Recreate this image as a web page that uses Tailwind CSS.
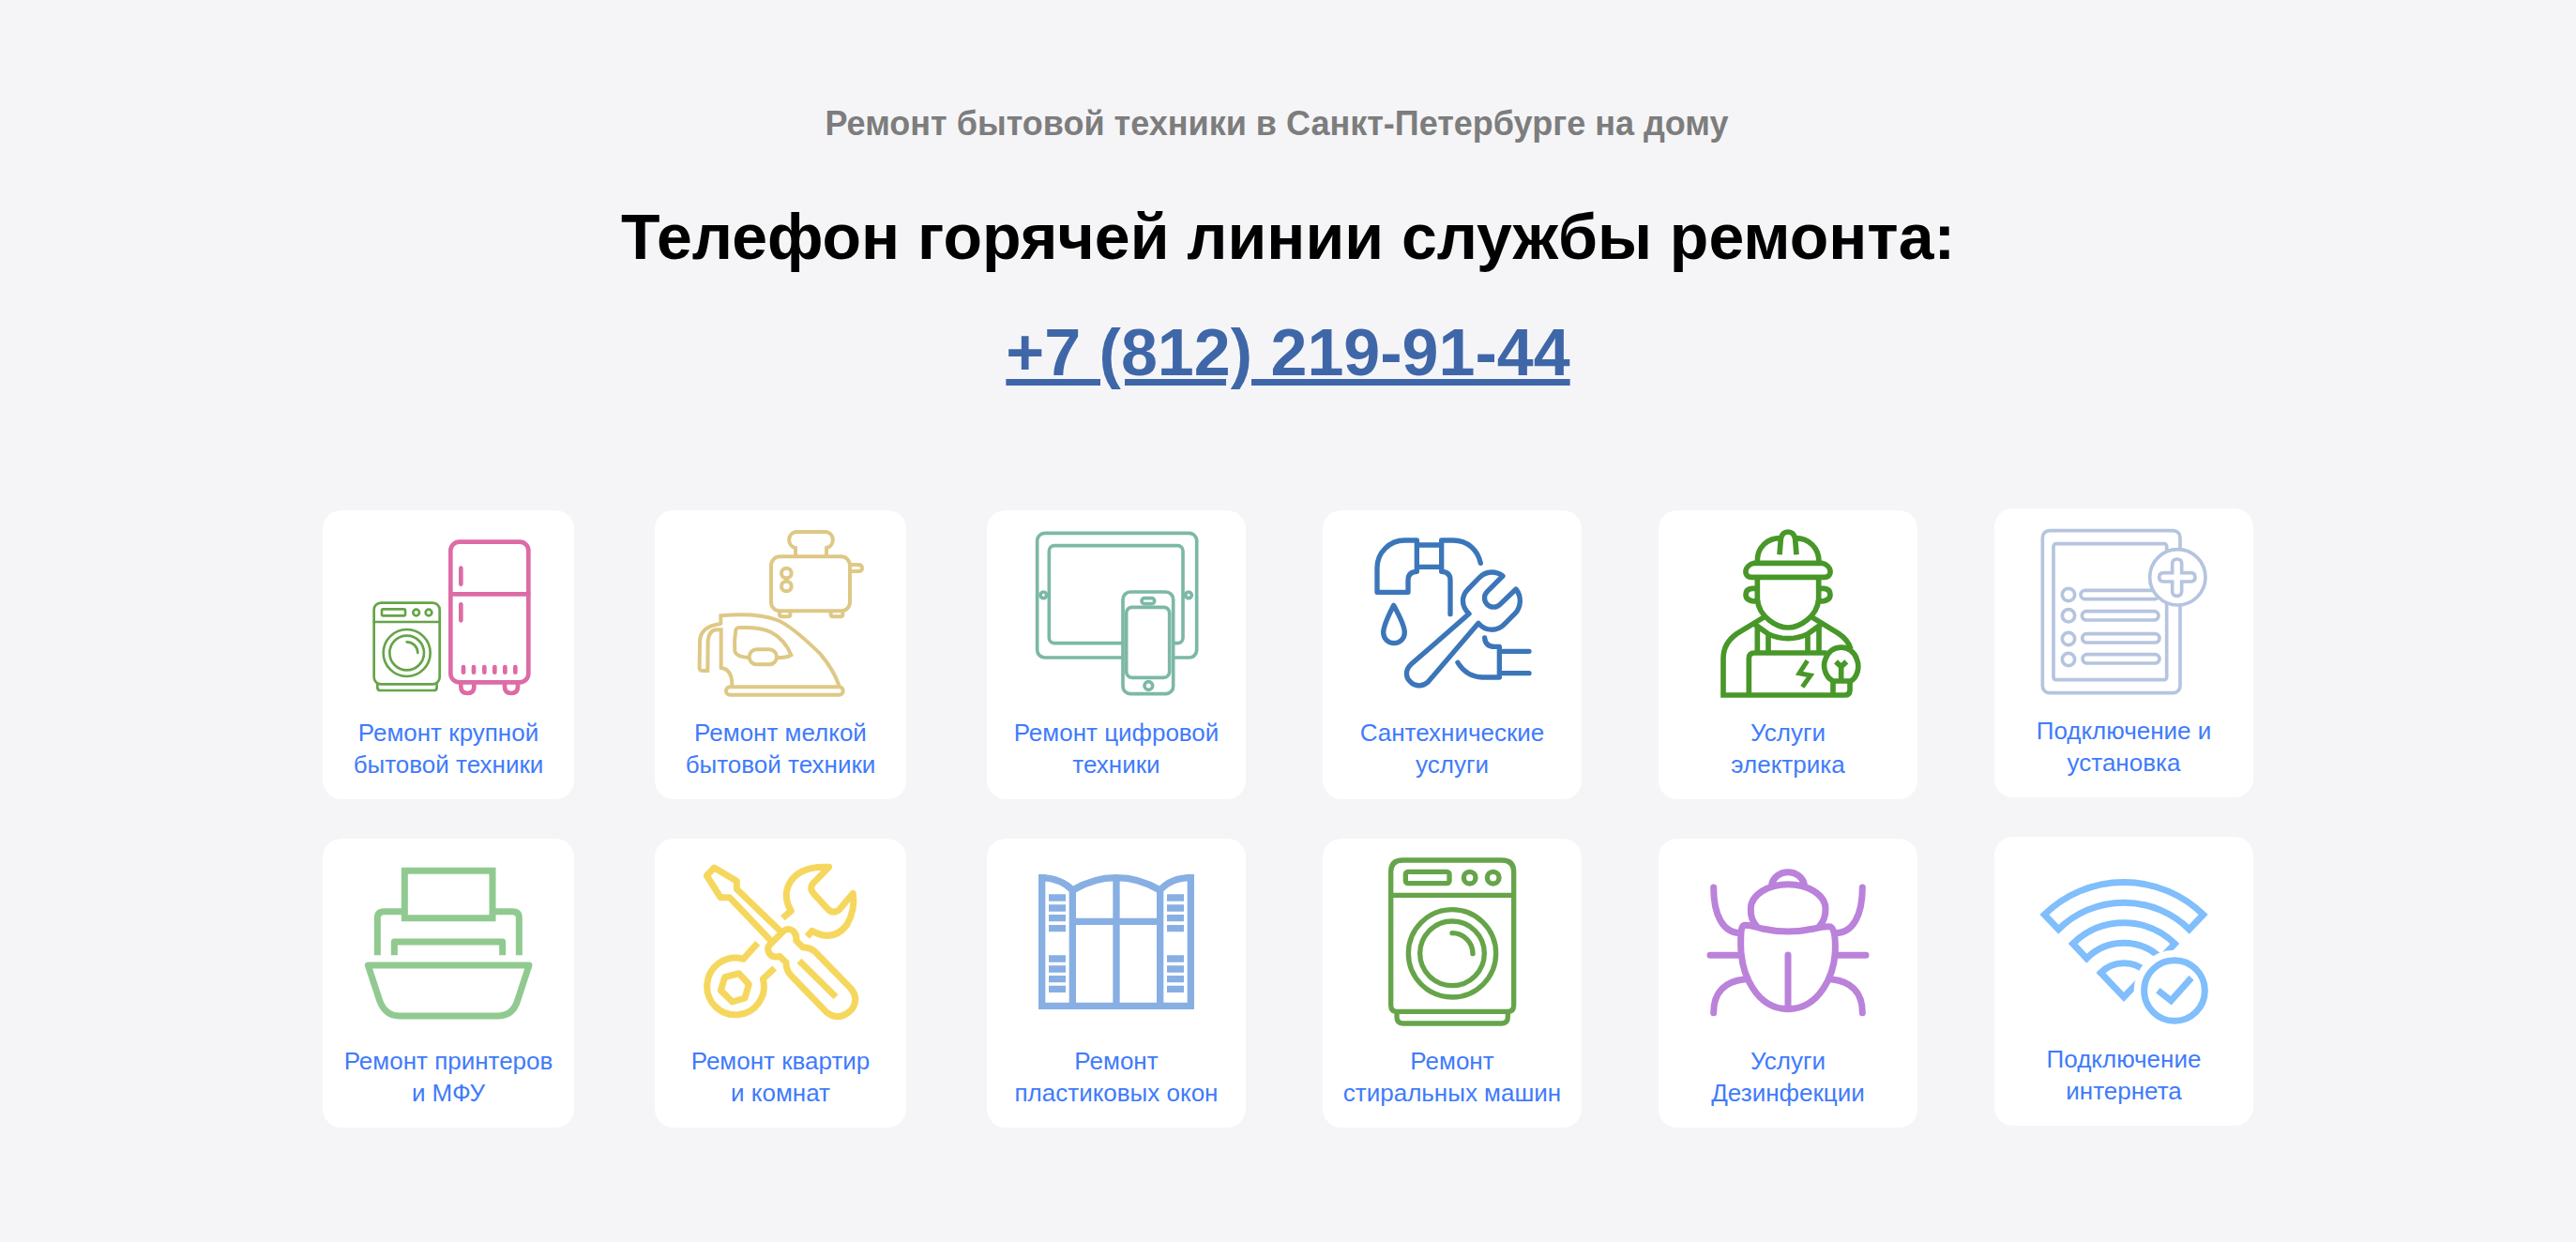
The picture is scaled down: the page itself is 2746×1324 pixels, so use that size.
<!DOCTYPE html>
<html lang="ru">
<head>
<meta charset="utf-8">
<meta name="viewport" content="width=device-width, initial-scale=1">
<title>Ремонт бытовой техники в Санкт-Петербурге на дому</title>
<script src="https://cdn.jsdelivr.net/npm/@tailwindcss/browser@4"></script>
</head>
<body class="min-h-screen bg-[#f5f5f8] font-['Liberation_Sans',Arial,sans-serif]">
<main class="px-6 pt-[108px] pb-[120px]">
  <header class="text-center font-bold">
    <p class="pr-6 text-[36px] leading-[48px] text-[#7d7d7d]">Ремонт бытовой техники в Санкт-Петербурге на дому</p>
    <h1 class="mt-[56px] text-[68px] leading-[80px] text-black">Телефон горячей линии службы ремонта:</h1>
    <p class="mt-[44px] text-[70px] leading-[80px]"><a href="tel:+78122199144" class="text-[#3f67a8] underline">+7 (812) 219-91-44</a></p>
  </header>

  <ul class="mx-auto mt-[128px] grid max-w-[2058px] grid-cols-[354fr_354fr_358fr_358fr_358fr_276fr] gap-y-[42px] text-center text-[26px] leading-[34px] text-[#3f7bfb]">
    <li class="pr-[86px]"><a href="#" class="flex flex-col items-center gap-5 rounded-[20px] bg-white py-5">
      <svg class="size-[180px]" viewBox="144 72 540 540" fill="none" stroke-linecap="round" aria-hidden="true">
        <g stroke="#65a448" stroke-width="8"><rect x="176" y="308" width="210" height="260" rx="22"/><path d="M176 369H386M281 433A35 35 0 0 1 316 468M187 570V578Q187 588 197 588H367Q377 588 377 578V570"/><rect x="201" y="328" width="75" height="21" rx="4"/><circle cx="311" cy="339" r="10"/><circle cx="351" cy="339" r="10"/><circle cx="281" cy="468" r="75"/><circle cx="281" cy="468" r="55"/></g>
        <g stroke="#dd6ba6" stroke-width="14"><rect x="421" y="113" width="249" height="449" rx="28"/><path d="M421 280H670M454 197V248M454 313V364M462 513V530M495 513V530M529 513V530M562 513V530M595 513V530M628 513V530M454 565V576Q454 597 475 597Q496 597 496 576V565M594 565V576Q594 597 615 597Q636 597 636 576V565"/></g>
      </svg><span>Ремонт крупной<br>бытовой техники</span></a></li>

    <li class="pr-[86px]"><a href="#" class="flex flex-col items-center gap-5 rounded-[20px] bg-white py-5">
      <svg class="size-[180px]" viewBox="156 72 540 540" fill="none" stroke="#dec885" stroke-width="12" aria-hidden="true">
        <rect x="396" y="160" width="252" height="174" rx="28"/><path d="M474 157V132A26 26 0 0 1 475 81H572A26 26 0 0 1 573 132V157M650 186H674Q687 186 687 197Q687 207 674 207H650M423 336V346Q423 352 430 352H450Q457 352 457 346V336M587 336V346Q587 352 594 352H618Q625 352 625 346V336"/><circle cx="445" cy="213" r="16"/><circle cx="445" cy="255" r="16"/>
        <path d="M235 378V349Q350 338 415 363Q460 380 552 470Q595 520 614 574M236 375Q170 382 168 430L167 510Q165 525 176 525H193L194 430Q198 393 224 394H236V516Q272 520 271 574"/><path d="M324 483Q283 480 280 462Q277 430 283 395Q286 387 295 387Q365 385 396 402Q440 425 460 475Q445 484 417 484"/><rect x="326" y="457" width="88" height="48" rx="24"/><rect x="252" y="577" width="374" height="25" rx="12"/>
      </svg><span>Ремонт мелкой<br>бытовой техники</span></a></li>

    <li class="pr-[82px]"><a href="#" class="flex flex-col items-center gap-5 rounded-[20px] bg-white py-5">
      <svg class="size-[180px]" viewBox="165 72 540 540" fill="none" stroke="#7cb8a6" stroke-width="11" aria-hidden="true">
        <rect x="182" y="85" width="510" height="398" rx="24"/><rect x="220" y="125" width="428" height="312" rx="17"/><circle cx="202" cy="283" r="10"/><circle cx="666" cy="283" r="10"/>
        <rect x="456" y="273" width="161" height="326" rx="24" fill="#fff"/><rect x="467" y="322" width="138" height="225" rx="18"/><rect x="516" y="293" width="41" height="18" rx="9"/><circle cx="538" cy="573" r="13"/>
      </svg><span>Ремонт цифровой<br>техники</span></a></li>

    <li class="pr-[82px]"><a href="#" class="flex flex-col items-center gap-5 rounded-[20px] bg-white py-5">
      <svg class="size-[180px]" viewBox="174 72 540 540" fill="none" stroke="#3b76b9" stroke-width="16" stroke-linecap="round" stroke-linejoin="round" aria-hidden="true">
        <path d="M331 108H292A88 88 0 0 0 204 196V274H303V236Q303 208 331 208ZM331 123H410M331 193H410M438 344V236Q438 208 410 208V108H447C494 108 526 140 535 181"/>
        <path d="M257 316Q292 380 292 403A34 34 0 0 1 224 403Q224 380 257 316Z"/>
        <path d="M498 343C470 315 475 285 494 265L530 228C553 204 585 206 606 222L556 272A28 28 0 0 0 597 313L648 264C668 290 663 322 646 341L611 376C588 400 550 400 528 373L366 562C345 580 320 572 310 560C294 546 294 522 312 505Z"/>
        <path d="M548 420Q550 448 580 448H595V546H540Q490 544 462 499M600 463H690M600 533H690"/>
      </svg><span>Сантехнические<br>услуги</span></a></li>

    <li class="pr-[82px]"><a href="#" class="flex flex-col items-center gap-5 rounded-[20px] bg-white py-5">
      <svg class="size-[180px]" viewBox="168 72 540 540" fill="none" stroke="#489729" stroke-width="17" aria-hidden="true">
        <path d="M340 178C338 128 374 101 414 101M462 101C504 101 538 132 537 178M411 154L415 104Q419 81 438 81Q457 81 461 104L465 154M330 181H546C580 188 582 226 554 226H322C294 226 296 188 330 181Z"/>
        <path d="M340 230V295C344 355 405 387 438 387C471 387 532 355 536 295V230M338 262H322Q303 264 303 282Q303 303 338 303M538 262H554Q573 264 573 282Q573 303 538 303"/>
        <path d="M364 352L275 406Q231 437 231 485V603H620Q635 603 636 588V558M512 352L600 406Q630 426 639 456M328 374L376 408Q438 436 500 408L548 374M340 386V462M375 408V462M501 408V462M537 386V462M313 600V485Q313 468 331 468H562"/>
        <path d="M500 493L474 533L510 540L484 577" stroke-width="15"/>
        <path d="M582 558C556 545 548 510 558 487C577 436 643 440 658 488C669 516 658 548 638 558ZM582 558V600M608 555V512L591 496M608 512L625 496" stroke-width="17"/>
      </svg><span>Услуги<br>электрика</span></a></li>

    <li class="-mt-0.5"><a href="#" class="flex flex-col items-center gap-5 rounded-[20px] bg-white py-5">
      <svg class="size-[180px]" viewBox="162 66 540 540" fill="none" stroke="#b5c4df" stroke-width="11" aria-hidden="true">
        <rect x="172" y="77" width="440" height="519" rx="22"/><rect x="207" y="119" width="362" height="435" rx="8"/>
        <circle cx="255" cy="282" r="20"/><circle cx="255" cy="349" r="20"/><circle cx="255" cy="423" r="20"/><circle cx="255" cy="489" r="20"/>
        <rect x="294" y="268" width="250" height="28" rx="14"/><rect x="298" y="335" width="245" height="28" rx="14"/><rect x="299" y="407" width="247" height="28" rx="14"/><rect x="300" y="473" width="246" height="28" rx="14"/>
        <circle cx="604" cy="226" r="89" fill="#fff"/><path d="M587 212V183Q587 168 602 168Q617 168 617 183V212H646Q660 212 660 226Q660 240 646 240H617V271Q617 286 602 286Q587 286 587 271V240H559Q545 240 545 226Q545 212 559 212Z"/>
      </svg><span>Подключение и<br>установка</span></a></li>

    <li class="pr-[86px]"><a href="#" class="flex flex-col items-center gap-5 rounded-[20px] bg-white py-5">
      <svg class="size-[180px]" viewBox="144 72 540 540" fill="none" stroke="#90ca90" stroke-width="21" stroke-linejoin="round" aria-hidden="true">
        <path d="M274 115H555V266H274Z" stroke-linejoin="miter"/><path d="M266 245H208Q187 245 187 266V385M563 245H619Q640 245 640 266V385M241 385V342H587V385M157 417H672L635 530Q620 579 572 579H257Q212 579 194 530Z"/>
      </svg><span>Ремонт принтеров<br>и МФУ</span></a></li>

    <li class="pr-[86px]"><a href="#" class="flex flex-col items-center gap-5 rounded-[20px] bg-white py-5">
      <svg class="size-[180px]" viewBox="1206 72 540 540" fill="none" stroke="#f6d75e" stroke-width="21" stroke-linejoin="round" aria-hidden="true">
        <path d="M1476 308L1336 173V148L1264 105L1240 130L1284 200H1313L1447 340"/>
        <path d="M1443 350L1484 309Q1500 295 1516 307Q1530 320 1526 338L1548 360Q1568 358 1586 373L1700 490Q1728 522 1705 557Q1665 600 1622 566L1510 450Q1494 435 1494 408L1473 388Q1452 395 1441 380Q1430 362 1443 350Z"/><path d="M1536 403L1653 518"/>
        <path d="M1483 266L1510 243Q1484 200 1502 160Q1532 98 1631 103L1580 155Q1567 172 1582 188L1628 238Q1645 255 1665 238L1708 187Q1716 240 1688 288Q1644 345 1577 307L1561 325"/>
        <path d="M1403 346L1357 397A91 91 0 1 0 1420 461L1457 426M1343 443L1375 478L1362 522L1322 534L1285 497L1298 455Z"/>
      </svg><span>Ремонт квартир<br>и комнат</span></a></li>

    <li class="pr-[82px]"><a href="#" class="flex flex-col items-center gap-5 rounded-[20px] bg-white py-5">
      <svg class="size-[180px]" viewBox="165 72 540 540" fill="none" stroke="#88afe3" stroke-width="22" aria-hidden="true">
        <path d="M197 137V547H673V137M197 137Q260 140 295 177Q362 137 435 137Q508 137 575 177Q610 137 673 137M295 177V547M435 137V547M575 177V547M295 277H575"/><path d="M186 126H210V148H186ZM660 126H684V148H660Z" fill="#88afe3" stroke="none"/>
        <path d="M219 201H273M219 234H273M219 266H273M219 299H273M219 396H273M219 429H273M219 461H273M219 493H273M597 201H651M597 234H651M597 266H651M597 299H651M597 396H651M597 429H651M597 461H651M597 493H651"/>
      </svg><span>Ремонт<br>пластиковых окон</span></a></li>

    <li class="pr-[82px]"><a href="#" class="flex flex-col items-center gap-5 rounded-[20px] bg-white py-5">
      <svg class="size-[180px]" viewBox="174 72 540 540" fill="none" stroke="#66a449" stroke-width="16" stroke-linecap="round" aria-hidden="true">
        <path d="M248 193V118Q248 81 286 81H603Q641 81 641 118V545Q641 565 621 565H268Q248 565 248 545V193H641M267 567V583Q267 603 287 603H602Q622 603 622 583V567M444 314A66 66 0 0 1 510 380"/><rect x="295" y="118" width="140" height="37" rx="8"/><circle cx="500" cy="137" r="19"/><circle cx="575" cy="137" r="19"/><circle cx="444" cy="379" r="140"/><circle cx="444" cy="379" r="103"/>
      </svg><span>Ремонт<br>стиральных машин</span></a></li>

    <li class="pr-[82px]"><a href="#" class="flex flex-col items-center gap-5 rounded-[20px] bg-white py-5">
      <svg class="size-[180px]" viewBox="168 72 540 540" fill="none" stroke="#ba82da" stroke-width="21" stroke-linecap="round" aria-hidden="true">
        <path d="M386 158A53 48 0 0 1 490 158M438 158C500 158 558 190 558 237Q558 270 540 290M336 290Q318 270 319 237C319 190 376 158 438 158"/>
        <path d="M438 557C340 557 287 450 287 350C287 310 287 288 302 289Q320 290 355 300Q438 318 521 300Q552 292 570 293Q588 293 589 350C592 450 536 557 438 557ZM438 384V550"/>
        <path d="M200 168C200 260 232 312 282 314M676 168C676 260 644 312 594 314M189 385H282M687 385H598M200 569C200 500 240 468 298 462M676 569C676 500 636 468 578 462"/>
      </svg><span>Услуги<br>Дезинфекции</span></a></li>

    <li class="-mt-0.5"><a href="#" class="flex flex-col items-center gap-5 rounded-[20px] bg-white py-5">
      <svg class="size-[180px]" viewBox="162 66 540 540" fill="none" stroke="#80befc" stroke-width="21" aria-hidden="true">
        <path d="M178 255A363 363 0 0 1 686 255L641 302A298 298 0 0 0 223 302ZM269 348A233 233 0 0 1 595 348L551 395A169 169 0 0 0 313 395ZM358 441A104 104 0 0 1 506 441L432 519Z"/>
        <circle cx="594" cy="498" r="130" fill="#fff" stroke="none"/><circle cx="594" cy="498" r="97"/><path d="M541 497L583 530L648 457"/>
      </svg><span>Подключение<br>интернета</span></a></li>
  </ul>
</main>
</body>
</html>
